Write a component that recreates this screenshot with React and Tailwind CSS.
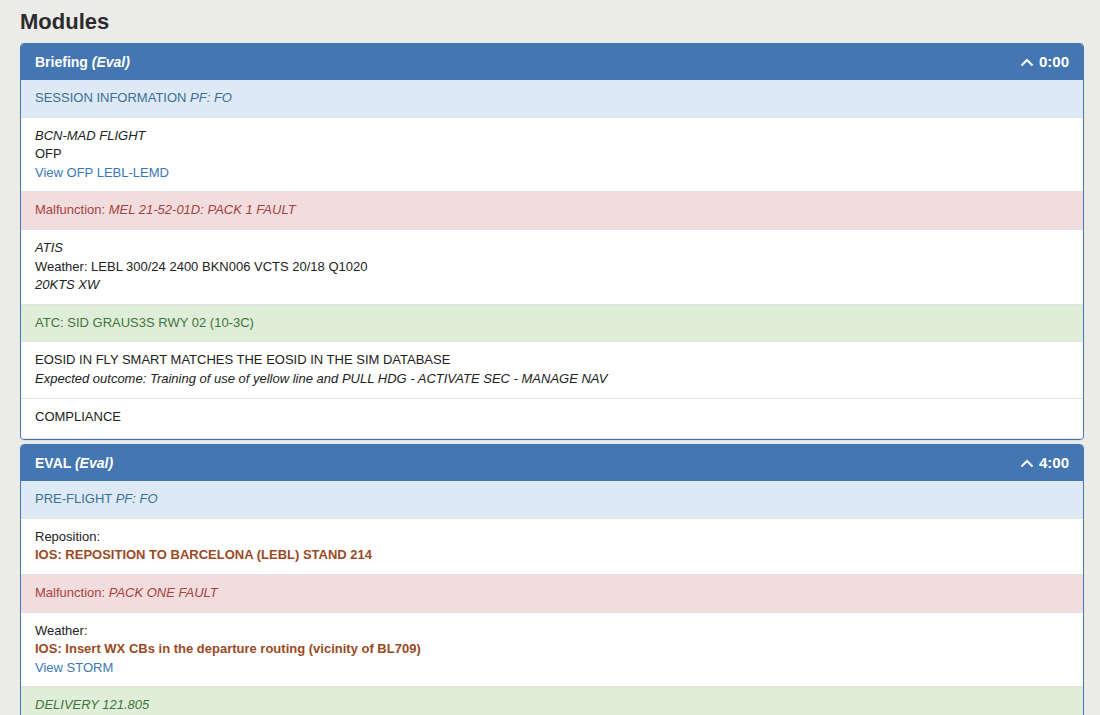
import React from "react";

const tones = {
  info: "bg-[#dde9f5] text-[#3a6f96]",
  danger: "bg-[#f1dddd] text-[#a8413f]",
  success: "bg-[#dfeed8] text-[#3f7440]",
  plain: "bg-white text-[#222]",
};

function Row({ tone = "plain", children }) {
  return (
    <div className={`px-[14px] py-[9px] border-t border-[#e2e2e2] first:border-t-0 ${tones[tone]}`}>
      {children}
    </div>
  );
}

function Chevron() {
  return (
    <svg width="14" height="9" viewBox="0 0 14 9" className="mr-[5px]">
      <path d="M1.5 7.5 L7 2 L12.5 7.5" fill="none" stroke="white" strokeWidth="2" />
    </svg>
  );
}

function Panel({ title, time, children }) {
  return (
    <div className="rounded-[4px] border border-[#4477b1] bg-white overflow-hidden shadow-[0_1px_1px_rgba(0,0,0,0.05)]">
      <div className="bg-[#4477b1] text-white px-[14px] h-[36px] flex items-center justify-between">
        <h3 className="text-[14px] font-bold">{title}</h3>
        <span className="flex items-center text-[15px] font-bold">
          <Chevron />
          {time}
        </span>
      </div>
      <div className="pb-[3px] border-b border-[#e2e2e2]">{children}</div>
    </div>
  );
}

export default function App() {
  return (
    <div
      className="min-h-screen bg-[#ebebea] text-[13px] leading-[18.6px] px-5 pb-6"
      style={{ fontFamily: '"Liberation Sans", Arial, sans-serif' }}
    >
      <h1 className="text-[22px] font-bold text-[#2b2b2b] pt-[8px] pb-[8px] leading-[27px]">Modules</h1>
      <div className="flex flex-col gap-[4px] w-[1064px]">
        <Panel title={<>Briefing <i>(Eval)</i></>} time="0:00">
          <Row tone="info">SESSION INFORMATION <i>PF: FO</i></Row>
          <Row>
            <div className="italic">BCN-MAD FLIGHT</div>
            <div>OFP</div>
            <div className="text-[#3a78b8]">View OFP LEBL-LEMD</div>
          </Row>
          <Row tone="danger">Malfunction: <i>MEL 21-52-01D: PACK 1 FAULT</i></Row>
          <Row>
            <div className="italic">ATIS</div>
            <div>Weather: LEBL 300/24 2400 BKN006 VCTS 20/18 Q1020</div>
            <div className="italic">20KTS XW</div>
          </Row>
          <Row tone="success">ATC: SID GRAUS3S RWY 02 (10-3C)</Row>
          <Row>
            <div>EOSID IN FLY SMART MATCHES THE EOSID IN THE SIM DATABASE</div>
            <div className="italic">Expected outcome: Training of use of yellow line and PULL HDG - ACTIVATE SEC - MANAGE NAV</div>
          </Row>
          <Row>COMPLIANCE</Row>
        </Panel>
        <Panel title={<>EVAL <i>(Eval)</i></>} time="4:00">
          <Row tone="info">PRE-FLIGHT <i>PF: FO</i></Row>
          <Row>
            <div>Reposition:</div>
            <div className="font-bold text-[#9a4a24]">IOS: REPOSITION TO BARCELONA (LEBL) STAND 214</div>
          </Row>
          <Row tone="danger">Malfunction: <i>PACK ONE FAULT</i></Row>
          <Row>
            <div>Weather:</div>
            <div className="font-bold text-[#9a4a24]">IOS: Insert WX CBs in the departure routing (vicinity of BL709)</div>
            <div className="text-[#3a78b8]">View STORM</div>
          </Row>
          <Row tone="success"><i>DELIVERY 121.805</i></Row>
        </Panel>
      </div>
    </div>
  );
}
